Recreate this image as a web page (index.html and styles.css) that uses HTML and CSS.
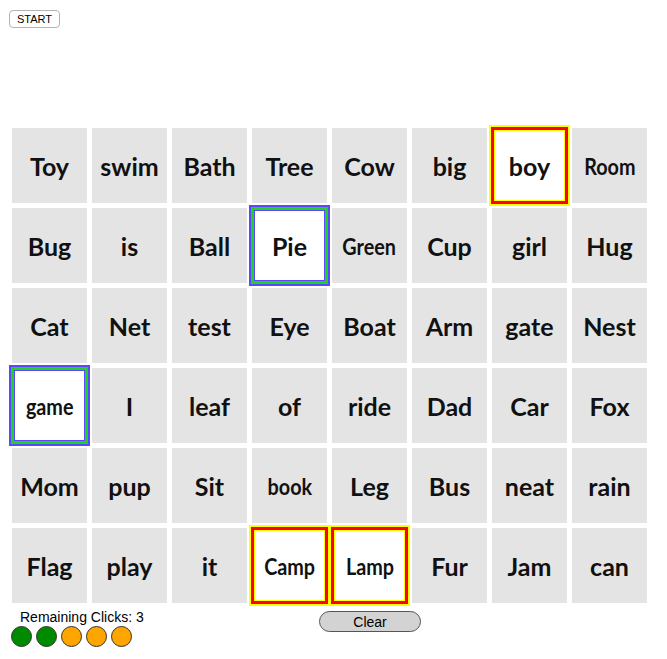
FILE: index.html
```html
<!DOCTYPE html>
<html>
<head>
<meta charset="utf-8">
<link rel="stylesheet" href="styles.css">
</head>
<body>
<div class="top"><button class="start">START</button></div>
<div class="grid">
  <div class="cell">Toy</div><div class="cell">swim</div><div class="cell">Bath</div><div class="cell">Tree</div><div class="cell">Cow</div><div class="cell">big</div><div class="cell sel-red">boy</div><div class="cell"><span class="narrow">Room</span></div>
  <div class="cell">Bug</div><div class="cell">is</div><div class="cell">Ball</div><div class="cell sel-blue">Pie</div><div class="cell"><span class="narrow">Green</span></div><div class="cell">Cup</div><div class="cell">girl</div><div class="cell">Hug</div>
  <div class="cell">Cat</div><div class="cell">Net</div><div class="cell">test</div><div class="cell">Eye</div><div class="cell">Boat</div><div class="cell">Arm</div><div class="cell">gate</div><div class="cell">Nest</div>
  <div class="cell sel-blue"><span class="narrow">game</span></div><div class="cell">I</div><div class="cell">leaf</div><div class="cell">of</div><div class="cell">ride</div><div class="cell">Dad</div><div class="cell">Car</div><div class="cell">Fox</div>
  <div class="cell">Mom</div><div class="cell">pup</div><div class="cell">Sit</div><div class="cell"><span class="narrow">book</span></div><div class="cell">Leg</div><div class="cell">Bus</div><div class="cell">neat</div><div class="cell">rain</div>
  <div class="cell">Flag</div><div class="cell">play</div><div class="cell">it</div><div class="cell sel-red"><span class="narrow">Camp</span></div><div class="cell sel-red"><span class="narrow">Lamp</span></div><div class="cell">Fur</div><div class="cell">Jam</div><div class="cell">can</div>
</div>
<div class="footer">
  <div class="status">
    <div class="remaining">Remaining Clicks: 3</div>
    <div class="dots">
      <span class="dot green"></span><span class="dot green"></span><span class="dot orange"></span><span class="dot orange"></span><span class="dot orange"></span>
    </div>
  </div>
  <button class="clear">Clear</button>
</div>
</body>
</html>
```
FILE: styles.css
```css
html, body {
  margin: 0;
  padding: 0;
  background: #fff;
}
body {
  font-family: "Liberation Sans", Arial, sans-serif;
  width: 667px;
  height: 659px;
  overflow: hidden;
}
.top {
  padding: 10px 0 0 9px;
  height: 128px;
  box-sizing: border-box;
}
.start {
  display: block;
  width: 51px;
  height: 18px;
  padding: 0;
  border: 1px solid #b4b4b4;
  border-radius: 4px;
  background: #fff;
  font-family: "Liberation Sans", Arial, sans-serif;
  font-size: 11px;
  color: #000;
  line-height: 16px;
}
.grid {
  display: grid;
  grid-template-columns: repeat(8, 75px);
  grid-auto-rows: 75px;
  gap: 5px;
  margin-left: 12px;
}
.cell {
  position: relative;
  background: #e4e4e4;
  display: flex;
  align-items: center;
  justify-content: center;
  font-family: Lato, "Open Sans", sans-serif;
  font-weight: 700;
  font-size: 25px;
  color: #111;
}
.narrow {
  display: inline-block;
  font-size: 23px;
  font-weight: 700;
  transform: scaleX(0.86);
}
.sel-red, .sel-blue {
  background: #fff;
}
.sel-red::after, .sel-blue::after {
  content: "";
  position: absolute;
  top: -3px;
  left: -3px;
  right: -3px;
  bottom: -3px;
  box-sizing: border-box;
}
.sel-red::after {
  border: 2px solid #ffff00;
  box-shadow: inset 0 0 0 3px #ff0000, inset 0 0 0 4px #ffff00;
}
.sel-blue::after {
  border: 2px solid #5a48ff;
  box-shadow: inset 0 0 0 3px #1ed21e, inset 0 0 0 4px #5a48ff;
}
.footer {
  display: flex;
  align-items: flex-start;
  margin-top: 6px;
}
.status {
  padding-left: 11px;
  width: 308px;
}
.remaining {
  font-size: 14px;
  line-height: 16px;
  padding-left: 9px;
  color: #000;
}
.dots {
  display: flex;
  gap: 4px;
  margin-top: 1px;
}
.dot {
  width: 19px;
  height: 19px;
  border-radius: 50%;
  border: 1px solid #333;
}
.green { background: #008a00; }
.orange { background: #ffa500; }
.clear {
  width: 102px;
  height: 21px;
  margin-top: 2px;
  border: 1px solid #555;
  border-radius: 11px;
  background: #d3d3d3;
  font-family: "Liberation Sans", Arial, sans-serif;
  font-size: 14px;
  color: #000;
  padding: 0;
}
```
